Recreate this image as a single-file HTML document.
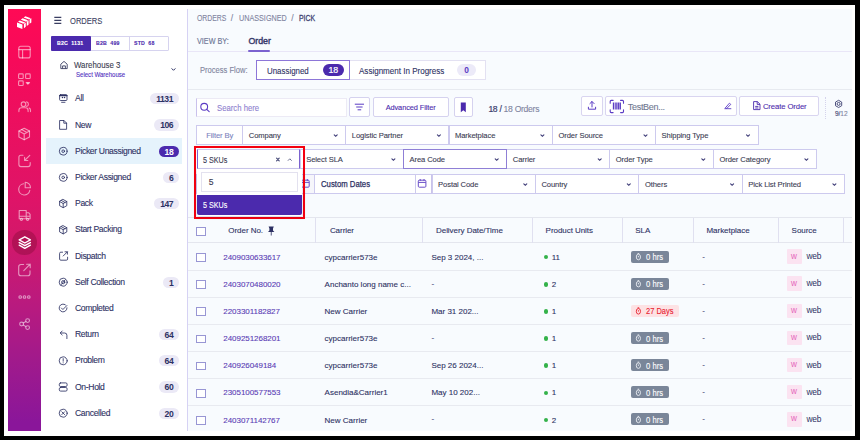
<!DOCTYPE html>
<html><head><meta charset="utf-8"><style>
*{box-sizing:border-box;margin:0;padding:0}
html,body{width:860px;height:440px;overflow:hidden;background:#000}
body{position:relative;font-family:"Liberation Sans",sans-serif;color:#2d3163}
.a{position:absolute}
.t{position:absolute;white-space:nowrap;line-height:1;-webkit-text-stroke:0.1px currentColor}
svg{position:absolute;overflow:visible}
#frame{position:absolute;left:4px;top:5px;width:851px;height:431px;background:#fff}
#rail{position:absolute;left:8px;top:9px;width:33px;height:422px;background:linear-gradient(180deg,#ff0a55 0%,#f60a5a 12.6%,#ea1060 29%,#de1468 45.7%,#d2186a 55%,#ba1a7e 69.4%,#a01a8c 83.6%,#8a169a 98%)}
#nav{position:absolute;left:41px;top:9px;width:147px;height:422px;background:#fff}
#main{position:absolute;left:188px;top:9px;width:664px;height:422px;background:#f8fbfe}
.bd{position:absolute;height:11.2px;border-radius:6px;background:#ebe9f6;color:#2d3163;font-size:8.6px;font-weight:bold;letter-spacing:-0.45px;line-height:12px;text-align:center}
.nl{position:absolute;font-size:8.6px;letter-spacing:-0.35px;color:#2d3163;white-space:nowrap;line-height:1;-webkit-text-stroke:0.1px currentColor}
.box{position:absolute;background:#fff;border:1px solid #dcd9f1}
.st{position:absolute;font-size:8px;color:#2d3163;white-space:nowrap;line-height:1}
</style></head><body>
<div id="frame"></div><div id="rail"></div><div id="nav"></div><div id="main"></div>
<svg style="left:0;top:0" width="60" height="440" viewBox="0 0 60 440" fill="none" stroke="rgba(255,255,255,0.55)" stroke-width="1.1" stroke-linecap="round" stroke-linejoin="round"><g fill="#fff" stroke="none"><polygon points="17.00,22.60 22.40,24.60 22.40,28.90 17.00,26.90"/><polygon points="18.01,21.83 23.41,23.83 25.20,22.47 19.80,20.47"/><polygon points="23.96,23.83 25.75,22.47 25.75,26.77 23.96,28.13"/><polygon points="20.81,19.70 26.21,21.70 28.00,20.33 22.60,18.33"/><polygon points="26.76,21.70 28.55,20.33 28.55,24.63 26.76,26.00"/><polygon points="23.61,17.57 29.01,19.57 30.80,18.20 25.40,16.20"/><polygon points="29.56,19.57 31.35,18.20 31.35,22.50 29.56,23.87"/></g><rect x="18.8" y="46.3" width="11.4" height="11.6" rx="2"/><path d="M18.8 49.6H30.2M22.6 49.6V57.9"/><rect x="18.6" y="73.9" width="4.6" height="4.6" rx="0.8"/><rect x="25.6" y="73.9" width="4.6" height="4.6" rx="0.8"/><rect x="18.6" y="80.9" width="4.6" height="4.6" rx="0.8"/><path d="M26.2 82.6L27.9 84.2L29.6 82.6Z" fill="rgba(255,255,255,0.55)"/><circle cx="23.5" cy="104.2" r="2.3"/><path d="M18.9 111.6V110.4a2.6 2.6 0 0 1 2.6-2.6h4a2.6 2.6 0 0 1 2.6 2.6v1.2M26.6 101.9a2.3 2.3 0 0 1 0 4.5M29.2 108a2.3 2.3 0 0 1 1.3 2.2v1.4"/><path d="M24.2 128.2l5.3 2.9v5.8l-5.3 2.9l-5.3-2.9v-5.8z"/><path d="M18.9 131.1l5.3 2.9l5.3-2.9M24.2 134v5.8M21.6 129.6l5.3 2.9"/><path d="M23.0 155.3H20.9a2 2 0 0 0-2 2v7.3a2 2 0 0 0 2 2h7.3a2 2 0 0 0 2-2v-2.1"/><path d="M29.8 155.3L24.6 160.5M24.6 157.3V160.5H27.8"/><path d="M29.8 190.4a5.6 5.6 0 1 1-6.3-6.6"/><path d="M25.2 182.2v5.5h5.3a5.4 5.4 0 0 0-5.3-5.5z"/><path d="M19.2 210.5h7v8.2h-7zM26.2 212.8h2.6l1.3 1.6v4.3h-3.9M19.2 216.2h10.9"/><circle cx="21.4" cy="219.3" r="1.1"/><circle cx="27.6" cy="219.3" r="1.1"/></svg>
<div class="a" style="left:12.3px;top:230.4px;width:24.5px;height:24.5px;border-radius:50%;background:rgba(105,8,35,0.3)"></div>
<svg style="left:0;top:0" width="60" height="440" viewBox="0 0 60 440" fill="none" stroke="rgba(255,255,255,0.55)" stroke-width="1.1" stroke-linecap="round" stroke-linejoin="round"><g stroke="#fff" stroke-width="1.4"><path d="M24.8 236.8l5.6 3.1l-5.6 3.1l-5.6-3.1z"/><path d="M19.2 242.6l5.6 3.1l5.6-3.1M19.2 245.2l5.6 3.1l5.6-3.1"/></g><path d="M23.6 264.5H21a2.3 2.3 0 0 0-2.3 2.3v6.7a2.3 2.3 0 0 0 2.3 2.3h6.7a2.3 2.3 0 0 0 2.3-2.3v-2.6"/><path d="M23.8 270.6L30.2 264.2M26.6 264.2h3.6v3.6"/><circle cx="20.2" cy="297" r="1.3"/><circle cx="24.5" cy="297" r="1.3"/><circle cx="28.8" cy="297" r="1.3"/><circle cx="21.6" cy="324" r="1.9"/><circle cx="27.6" cy="320.6" r="1.9"/><circle cx="27.6" cy="327.6" r="1.9"/><path d="M23.3 323l2.6-1.5M23.3 325l2.6 1.6"/></svg>
<div class="a" style="left:187px;top:9px;width:1px;height:422px;background:#d6d2f4"></div>
<svg style="left:0;top:0" width="200" height="60" viewBox="0 0 200 60" fill="none" stroke="#3a3e62" stroke-width="1.1"><path d="M54.3 17.4H61.3M54.3 20.4H61.3M54.3 23.4H61.3"/></svg>
<div class="t" style="left:69.7px;top:16.50px;font-size:8.6px;transform:scaleX(0.88);transform-origin:0 0;color:#3a3e62;letter-spacing:0px;">ORDERS</div>
<div class="a" style="left:51px;top:36px;width:118px;height:14.5px;border:1px solid #d6d3ef;border-radius:1px;background:#fff"></div>
<div class="a" style="left:51px;top:36px;width:39.6px;height:14.5px;background:#4b2aad;border-radius:1px"></div>
<div class="a" style="left:129.3px;top:36px;width:1px;height:14.5px;background:#d6d3ef"></div>
<div class="t" style="left:56.7px;top:41.05px;font-size:5.9px;transform:scaleX(0.89);transform-origin:0 0;color:#fff;font-weight:bold;letter-spacing:0.2px;">B2C&nbsp;&nbsp;1131</div>
<div class="t" style="left:95.6px;top:41.05px;font-size:5.9px;transform:scaleX(0.89);transform-origin:0 0;color:#4b2aad;font-weight:bold;letter-spacing:0.2px;">B2B&nbsp;&nbsp;499</div>
<div class="t" style="left:134.3px;top:41.05px;font-size:5.9px;transform:scaleX(0.89);transform-origin:0 0;color:#4b2aad;font-weight:bold;letter-spacing:0.2px;">STD&nbsp;&nbsp;68</div>
<svg style="left:0;top:0" width="200" height="90" viewBox="0 0 200 90" fill="none" stroke="#3a3e62" stroke-width="0.9" stroke-linejoin="round"><path d="M60.8 64.2L64 61.4L67.2 64.2V68.6H60.8Z"/><path d="M62.6 68.6V65.9H65.4V68.6"/></svg>
<div class="t" style="left:73.7px;top:60.60px;font-size:9px;transform:scaleX(0.87);transform-origin:0 0;color:#3b3d50;">Warehouse 3</div>
<div class="t" style="left:76.3px;top:72.40px;font-size:6.8px;transform:scaleX(0.89);transform-origin:0 0;color:#4f2fc0;">Select Warehouse</div>
<svg style="left:0;top:0" width="200" height="90" viewBox="0 0 200 90" fill="none" stroke="#3a3e62" stroke-width="0.9"><path d="M171.6 68.4L173.5 70.3L175.4 68.4" stroke="#2d3163" stroke-width="1"/></svg>
<div class="a" style="left:45.8px;top:137.6px;width:136.4px;height:26.5px;background:#e5f3fc"></div>
<div class="nl" style="left:75px;top:94.30px">All</div>
<div class="bd" style="left:150.0px;top:93.20px;width:29.2px;background:#ebe9f6;color:#2d3163">1131</div>
<div class="nl" style="left:75px;top:120.50px">New</div>
<div class="bd" style="left:154.2px;top:119.40px;width:25px;background:#ebe9f6;color:#2d3163">106</div>
<div class="nl" style="left:75px;top:146.70px">Picker Unassigned</div>
<div class="bd" style="left:158.7px;top:145.60px;width:20.5px;background:#4b2aad;color:#fff">18</div>
<div class="nl" style="left:75px;top:172.90px">Picker Assigned</div>
<div class="bd" style="left:163.0px;top:171.80px;width:16.2px;background:#ebe9f6;color:#2d3163">6</div>
<div class="nl" style="left:75px;top:199.10px">Pack</div>
<div class="bd" style="left:154.2px;top:198.00px;width:25px;background:#ebe9f6;color:#2d3163">147</div>
<div class="nl" style="left:75px;top:225.30px">Start Packing</div>
<div class="nl" style="left:75px;top:251.50px">Dispatch</div>
<div class="nl" style="left:75px;top:277.70px">Self Collection</div>
<div class="bd" style="left:163.0px;top:276.60px;width:16.2px;background:#ebe9f6;color:#2d3163">1</div>
<div class="nl" style="left:75px;top:303.90px">Completed</div>
<div class="nl" style="left:75px;top:330.10px">Return</div>
<div class="bd" style="left:158.7px;top:329.00px;width:20.5px;background:#ebe9f6;color:#2d3163">64</div>
<div class="nl" style="left:75px;top:356.30px">Problem</div>
<div class="bd" style="left:158.7px;top:355.20px;width:20.5px;background:#ebe9f6;color:#2d3163">64</div>
<div class="nl" style="left:75px;top:382.50px">On-Hold</div>
<div class="bd" style="left:158.7px;top:381.40px;width:20.5px;background:#ebe9f6;color:#2d3163">60</div>
<div class="nl" style="left:75px;top:408.70px">Cancelled</div>
<div class="bd" style="left:158.7px;top:407.60px;width:20.5px;background:#ebe9f6;color:#2d3163">20</div>
<svg style="left:0;top:0" width="200" height="440" viewBox="0 0 200 440" fill="none" stroke="#2d3163" stroke-width="0.85" stroke-linecap="round" stroke-linejoin="round"><rect x="59.6" y="94.6" width="7.4" height="5.9" rx="1"/><path d="M59.6 95.6H67" stroke-width="1.2"/><path d="M61.6 102.3H65"/><path d="M62.4 97.5h0.1M64.5 97.5h0.1" stroke-width="1.4"/><path d="M60 120.5H64L66.6 123.1V129.3H60Z"/><path d="M63.8 120.5V123.2H66.6"/><circle cx="63.2" cy="151.2" r="3.9"/><circle cx="63.2" cy="151.2" r="1.3"/><circle cx="63.2" cy="177.4" r="3.9"/><circle cx="63.2" cy="177.4" r="1.3"/><path d="M63.2 199.5l3.6 2v4.2l-3.6 2l-3.6-2v-4.2z"/><path d="M59.6 201.5l3.6 2l3.6-2M63.2 203.5v4.1M61.4 200.5l3.6 2"/><path d="M63.2 225.7l3.6 2v4.2l-3.6 2l-3.6-2v-4.2z"/><path d="M59.6 227.7l3.6 2l3.6-2M63.2 229.7v4.1M61.4 226.7l3.6 2"/><path d="M62.6 252.2H60.8a1.2 1.2 0 0 0-1.2 1.2v5.6a1.2 1.2 0 0 0 1.2 1.2h5.6a1.2 1.2 0 0 0 1.2-1.2V257.2"/><path d="M63.2 256.0L67.4 251.8M65 251.8h2.4v2.4"/><circle cx="63.2" cy="282.2" r="4"/><circle cx="63.2" cy="282.2" r="1.6"/><path d="M61.2 284.6L65.2 279.8"/><path d="M67 307.8a3.9 3.9 0 1 1-1.6-3"/><path d="M61.4 308.0l1.5 1.5l4-4"/><path d="M60.4 333.0H64.6a2.3 2.3 0 0 1 2.3 2.3V338.6M62.2 331.0L60.2 333.0L62.2 335.0"/><circle cx="63.2" cy="360.8" r="4"/><path d="M63.2 358.6V361.2M63.2 362.8v0.1"/><rect x="59.3" y="382.9" width="7.8" height="3.6" rx="1.3"/><rect x="59.3" y="387.5" width="7.8" height="3.6" rx="1.3"/><circle cx="63.2" cy="413.2" r="4"/><path d="M61.8 411.8l2.8 2.8M64.6 411.8l-2.8 2.8"/></svg>
<div class="a" style="left:188px;top:50.5px;width:664px;height:1px;background:#e9e6f7"></div>
<div class="a" style="left:188px;top:88.6px;width:664px;height:1px;background:#e7eaf0"></div>
<div class="t" style="left:196.9px;top:14.00px;font-size:8.6px;transform:scaleX(0.8);transform-origin:0 0;color:#80849f;">ORDERS</div>
<div class="t" style="left:230.8px;top:14.00px;font-size:8.6px;color:#80849f;">/</div>
<div class="t" style="left:238.8px;top:14.00px;font-size:8.6px;transform:scaleX(0.84);transform-origin:0 0;color:#80849f;">UNASSIGNED</div>
<div class="t" style="left:291.2px;top:14.00px;font-size:8.6px;color:#80849f;">/</div>
<div class="t" style="left:299.3px;top:14.00px;font-size:8.6px;transform:scaleX(0.8);transform-origin:0 0;color:#3c4070;-webkit-text-stroke:0.3px #3c4070;">PICK</div>
<div class="t" style="left:196.9px;top:36.75px;font-size:8.3px;transform:scaleX(0.87);transform-origin:0 0;color:#6e7796;-webkit-text-stroke:0.15px #6e7796;">VIEW BY:</div>
<div class="t" style="left:248.4px;top:36.60px;font-size:8.8px;color:#35386a;-webkit-text-stroke:0.4px #35386a;">Order</div>
<div class="a" style="left:248.4px;top:50.2px;width:21.4px;height:2px;background:#7b62cf;border-radius:1px"></div>
<div class="t" style="left:199.7px;top:65.90px;font-size:8.6px;transform:scaleX(0.88);transform-origin:0 0;color:#80849c;">Process Flow:</div>
<div class="a" style="left:256.4px;top:60.3px;width:230px;height:19.4px;background:#fff;border:1px solid #e3e1f2"></div>
<div class="a" style="left:256.4px;top:60.3px;width:93.3px;height:19.4px;border:1px solid #8d76d8"></div>
<div class="t" style="left:266.5px;top:67.10px;font-size:8.6px;transform:scaleX(0.92);transform-origin:0 0;color:#2d3163;">Unassigned</div>
<div class="bd" style="left:322.5px;top:64.4px;width:21.6px;height:12px;line-height:13px;background:#4b2aad;color:#fff;font-size:8.8px;font-weight:normal;letter-spacing:0;-webkit-text-stroke:0.2px #fff">18</div>
<div class="t" style="left:359px;top:67.10px;font-size:8.6px;transform:scaleX(0.935);transform-origin:0 0;color:#2d3163;">Assignment In Progress</div>
<div class="bd" style="left:457px;top:64.4px;width:19.2px;height:12px;line-height:13px;background:#eceaf8;color:#5b3cc4;font-size:8.4px;font-weight:bold;letter-spacing:0">0</div>
<div class="a" style="left:196.3px;top:98px;width:150.5px;height:19.2px;background:#fff;border:1px solid #eceaf5;border-left:1px solid #c9c1ec"></div>
<svg style="left:0;top:0" width="860" height="440" viewBox="0 0 860 440" fill="none" stroke="#5b3cc4" stroke-width="1.1" stroke-linecap="round"><circle cx="204.2" cy="106.8" r="3.4"/><path d="M206.7 109.3L209.2 111.6"/></svg>
<div class="t" style="left:217.4px;top:103.90px;font-size:8.6px;transform:scaleX(0.9);transform-origin:0 0;color:#8e82cf;">Search here</div>
<div class="a" style="left:349px;top:97px;width:20.7px;height:20px;background:#fff;border:1px solid #d5d2ef;border-radius:2px"></div>
<svg style="left:0;top:0" width="860" height="440" viewBox="0 0 860 440" fill="none" stroke="#5b3cc4" stroke-width="1" stroke-linecap="round"><path d="M355.2 104.2H363.6M356.6 107H362.2M358 109.8H360.8"/></svg>
<div class="a" style="left:372.5px;top:97px;width:76.2px;height:20.2px;background:#fff;border:1px solid #d5d2ef;border-radius:2px"></div>
<div class="t" style="left:385.7px;top:103.90px;font-size:7.4px;color:#4b2aad;letter-spacing:-0.1px;">Advanced Filter</div>
<div class="a" style="left:454px;top:97px;width:18.5px;height:20.2px;background:#fff;border:1px solid #d5d2ef;border-radius:2px"></div>
<svg style="left:0;top:0" width="860" height="440" viewBox="0 0 860 440"><path d="M460.8 102.6H465.8V112.2L463.3 110.2L460.8 112.2Z" fill="#4b2aad"/></svg>
<div class="t" style="left:488.4px;top:105.2px;font-size:8.6px;letter-spacing:-0.3px;color:#80849f"><span style="color:#3c4070;-webkit-text-stroke:0.2px #3c4070">18 /</span> 18 Orders</div>
<div class="a" style="left:581.4px;top:96.2px;width:21.2px;height:19.6px;background:#fff;border:1px solid #d9d5f0;border-radius:2px"></div>
<svg style="left:0;top:0" width="860" height="440" viewBox="0 0 860 440" fill="none" stroke="#5b3cc4" stroke-width="1" stroke-linecap="round" stroke-linejoin="round"><path d="M592 107V101.6M589.9 103.6L592 101.5L594.1 103.6M588.4 107.2V109.2H595.6V107.2"/></svg>
<div class="a" style="left:605.2px;top:96.1px;width:131.4px;height:19.9px;background:#fff;border:1px solid #d9d5f0;border-radius:2px"></div>
<svg style="left:0;top:0" width="860" height="440" viewBox="0 0 860 440" fill="none" stroke="#5b3cc4" stroke-width="1.1" stroke-linecap="round"><path d="M610.2 103.3V101.4a1 1 0 0 1 1-1h1.9M620.6 100.4h1.9a1 1 0 0 1 1 1v1.9M623.5 109.7v1.9a1 1 0 0 1-1 1h-1.9M613.1 112.6h-1.9a1 1 0 0 1-1-1v-1.9"/><path d="M613.6 102.6v6.9M616 102.6v6.9M618.2 102.6v6.9M620.2 102.6v6.9" stroke-width="1.5" stroke-linecap="butt"/><path d="M724.8 108.7H730.9M725.6 107.6L729.4 103.2L730.8 104.4L727 108.2Z" stroke-width="0.9"/></svg>
<div class="t" style="left:627.8px;top:102.50px;font-size:9px;color:#707891;letter-spacing:-0.3px;">TestBen...</div>
<div class="a" style="left:739.3px;top:96.2px;width:79.4px;height:19.9px;background:#fff;border:1px solid #d9d5f0;border-radius:2px"></div>
<svg style="left:0;top:0" width="860" height="440" viewBox="0 0 860 440" fill="none" stroke="#4b2aad" stroke-width="0.9" stroke-linejoin="round"><path d="M753.6 101.6H757.4L760 104.2V109.6H753.6Z"/><path d="M757.2 101.6V104.4H760M755.2 106.4H758.4M755.2 108H758.4"/></svg>
<div class="t" style="left:762.9px;top:102.75px;font-size:7.7px;color:#4b2aad;letter-spacing:-0.1px;">Create Order</div>
<div class="a" style="left:825.2px;top:96.5px;width:0;height:22.3px;border-left:1px dotted #d5d3ec"></div>
<svg style="left:0;top:0" width="860" height="440" viewBox="0 0 860 440" fill="none" stroke="#3c4070" stroke-width="0.9" stroke-linejoin="round"><path d="M838.6 100.3L841.7 102.1V105.7L838.6 107.5L835.5 105.7V102.1Z"/><circle cx="838.6" cy="103.9" r="1.5"/></svg>
<div class="t" style="left:835px;top:111.2px;font-size:6.6px;color:#3c4070;letter-spacing:-0.1px">9/<span style="color:#80849f">12</span></div>
<div class="a" style="left:196.3px;top:125px;width:47.0px;height:20px;background:#fff;border:1px solid #cdcaee;"></div>
<div class="t" style="left:206.2px;top:132.10px;font-size:7.6px;letter-spacing:-0.1px;color:#7a82bd">Filter By</div>
<div class="a" style="left:242.3px;top:125px;width:104.0px;height:20px;background:#fff;border:1px solid #cdcaee;"></div>
<div class="t" style="left:248.8px;top:132.10px;font-size:7.6px;letter-spacing:-0.1px;color:#3a3b52">Company</div>
<svg style="left:0;top:0" width="860" height="440" viewBox="0 0 860 440" fill="none" stroke="#3f3d78" stroke-width="1.1" stroke-linecap="round"><path d="M334.2 134.8L335.7 136.2L337.2 134.8"/></svg>
<div class="a" style="left:345.3px;top:125px;width:104.19999999999999px;height:20px;background:#fff;border:1px solid #cdcaee;"></div>
<div class="t" style="left:351.8px;top:132.10px;font-size:7.6px;letter-spacing:-0.1px;color:#3a3b52">Logistic Partner</div>
<svg style="left:0;top:0" width="860" height="440" viewBox="0 0 860 440" fill="none" stroke="#3f3d78" stroke-width="1.1" stroke-linecap="round"><path d="M437.4 134.8L438.9 136.2L440.4 134.8"/></svg>
<div class="a" style="left:448.5px;top:125px;width:104.5px;height:20px;background:#fff;border:1px solid #cdcaee;"></div>
<div class="t" style="left:455.0px;top:132.10px;font-size:7.6px;letter-spacing:-0.1px;color:#3a3b52">Marketplace</div>
<svg style="left:0;top:0" width="860" height="440" viewBox="0 0 860 440" fill="none" stroke="#3f3d78" stroke-width="1.1" stroke-linecap="round"><path d="M540.9 134.8L542.4 136.2L543.9 134.8"/></svg>
<div class="a" style="left:552px;top:125px;width:104.10000000000002px;height:20px;background:#fff;border:1px solid #cdcaee;"></div>
<div class="t" style="left:558.5px;top:132.10px;font-size:7.6px;letter-spacing:-0.1px;color:#3a3b52">Order Source</div>
<svg style="left:0;top:0" width="860" height="440" viewBox="0 0 860 440" fill="none" stroke="#3f3d78" stroke-width="1.1" stroke-linecap="round"><path d="M644.0 134.8L645.5 136.2L647.0 134.8"/></svg>
<div class="a" style="left:655.1px;top:125px;width:103.5px;height:20px;background:#fff;border:1px solid #cdcaee;"></div>
<div class="t" style="left:661.6px;top:132.10px;font-size:7.6px;letter-spacing:-0.1px;color:#3a3b52">Shipping Type</div>
<svg style="left:0;top:0" width="860" height="440" viewBox="0 0 860 440" fill="none" stroke="#3f3d78" stroke-width="1.1" stroke-linecap="round"><path d="M746.5 134.8L748.0 136.2L749.5 134.8"/></svg>
<div class="a" style="left:299.7px;top:149px;width:104.30000000000001px;height:20px;background:#fff;border:1px solid #cdcaee;"></div>
<div class="t" style="left:306.2px;top:156.10px;font-size:7.6px;letter-spacing:-0.1px;color:#3a3b52">Select SLA</div>
<svg style="left:0;top:0" width="860" height="440" viewBox="0 0 860 440" fill="none" stroke="#3f3d78" stroke-width="1.1" stroke-linecap="round"><path d="M391.9 158.8L393.4 160.2L394.9 158.8"/></svg>
<div class="a" style="left:506.3px;top:149px;width:103.99999999999994px;height:20px;background:#fff;border:1px solid #cdcaee;"></div>
<div class="t" style="left:512.8px;top:156.10px;font-size:7.6px;letter-spacing:-0.1px;color:#3a3b52">Carrier</div>
<svg style="left:0;top:0" width="860" height="440" viewBox="0 0 860 440" fill="none" stroke="#3f3d78" stroke-width="1.1" stroke-linecap="round"><path d="M598.2 158.8L599.7 160.2L601.2 158.8"/></svg>
<div class="a" style="left:609.3px;top:149px;width:104.60000000000002px;height:20px;background:#fff;border:1px solid #cdcaee;"></div>
<div class="t" style="left:615.8px;top:156.10px;font-size:7.6px;letter-spacing:-0.1px;color:#3a3b52">Order Type</div>
<svg style="left:0;top:0" width="860" height="440" viewBox="0 0 860 440" fill="none" stroke="#3f3d78" stroke-width="1.1" stroke-linecap="round"><path d="M701.8 158.8L703.3 160.2L704.8 158.8"/></svg>
<div class="a" style="left:712.9px;top:149px;width:104.10000000000002px;height:20px;background:#fff;border:1px solid #cdcaee;"></div>
<div class="t" style="left:719.4px;top:156.10px;font-size:7.6px;letter-spacing:-0.1px;color:#3a3b52">Order Category</div>
<svg style="left:0;top:0" width="860" height="440" viewBox="0 0 860 440" fill="none" stroke="#3f3d78" stroke-width="1.1" stroke-linecap="round"><path d="M804.9 158.8L806.4 160.2L807.9 158.8"/></svg>
<div class="a" style="left:403px;top:149px;width:104.30000000000001px;height:20px;background:#fff;border:1px solid #cdcaee;border-color:#8f7fd6"></div>
<div class="t" style="left:409.5px;top:156.10px;font-size:7.6px;letter-spacing:-0.1px;color:#3a3b52">Area Code</div>
<svg style="left:0;top:0" width="860" height="440" viewBox="0 0 860 440" fill="none" stroke="#3f3d78" stroke-width="1.1" stroke-linecap="round"><path d="M495.2 158.8L496.7 160.2L498.2 158.8"/></svg>
<div class="a" style="left:196.3px;top:174px;width:118px;height:20px;background:#fff;border:1px solid #cdcaee"></div>
<div class="a" style="left:297px;top:174px;width:17.5px;height:20px;background:#f6f6fb;border:1px solid #cdcaee;border-right:1.5px solid #c9c3ea"></div>
<div class="a" style="left:314px;top:174px;width:101.69999999999999px;height:20px;background:#fff;border:1px solid #cdcaee;"></div>
<div class="t" style="left:320.7px;top:179.95px;font-size:8.5px;transform:scaleX(0.91);transform-origin:0 0;color:#2d3163;-webkit-text-stroke:0.25px #2d3163;">Custom Dates</div>
<div class="a" style="left:414.7px;top:174px;width:17.2px;height:20px;background:#fff;border:1px solid #cdcaee;border-right:1.5px solid #c9c3ea"></div>
<div class="a" style="left:431.6px;top:174px;width:104.29999999999995px;height:20px;background:#fff;border:1px solid #cdcaee;"></div>
<div class="t" style="left:438.1px;top:181.10px;font-size:7.6px;letter-spacing:-0.1px;color:#3a3b52">Postal Code</div>
<svg style="left:0;top:0" width="860" height="440" viewBox="0 0 860 440" fill="none" stroke="#3f3d78" stroke-width="1.1" stroke-linecap="round"><path d="M523.8 183.8L525.3 185.2L526.8 183.8"/></svg>
<div class="a" style="left:534.9px;top:174px;width:104.5px;height:20px;background:#fff;border:1px solid #cdcaee;"></div>
<div class="t" style="left:541.4px;top:181.10px;font-size:7.6px;letter-spacing:-0.1px;color:#3a3b52">Country</div>
<svg style="left:0;top:0" width="860" height="440" viewBox="0 0 860 440" fill="none" stroke="#3f3d78" stroke-width="1.1" stroke-linecap="round"><path d="M627.3 183.8L628.8 185.2L630.3 183.8"/></svg>
<div class="a" style="left:638.4px;top:174px;width:104.30000000000007px;height:20px;background:#fff;border:1px solid #cdcaee;"></div>
<div class="t" style="left:644.9px;top:181.10px;font-size:7.6px;letter-spacing:-0.1px;color:#3a3b52">Others</div>
<svg style="left:0;top:0" width="860" height="440" viewBox="0 0 860 440" fill="none" stroke="#3f3d78" stroke-width="1.1" stroke-linecap="round"><path d="M730.6 183.8L732.1 185.2L733.6 183.8"/></svg>
<div class="a" style="left:741.7px;top:174px;width:103.29999999999995px;height:20px;background:#fff;border:1px solid #cdcaee;"></div>
<div class="t" style="left:748.2px;top:181.10px;font-size:7.6px;letter-spacing:-0.1px;color:#3a3b52">Pick List Printed</div>
<svg style="left:0;top:0" width="860" height="440" viewBox="0 0 860 440" fill="none" stroke="#3f3d78" stroke-width="1.1" stroke-linecap="round"><path d="M832.9 183.8L834.4 185.2L835.9 183.8"/></svg>
<svg style="left:0;top:0" width="860" height="440" viewBox="0 0 860 440" fill="none" stroke="#6a4fc8" stroke-width="1"><rect x="418.3" y="180.2" width="7.6" height="7" rx="1"/><path d="M418.3 182.4H425.9M420.2 179V181M424 179V181"/><rect x="301.6" y="180.2" width="7.6" height="7" rx="1"/><path d="M301.6 182.4H309.2M303.5 179V181M307.3 179V181"/></svg>
<div class="a" style="left:188px;top:217.2px;width:664px;height:1px;background:#e4e6ee"></div>
<div class="a" style="left:188px;top:242.2px;width:664px;height:1px;background:#e4e6ee"></div>
<div class="a" style="left:315.4px;top:218px;width:1px;height:24.5px;background:#e0e0f0"></div>
<div class="a" style="left:421.5px;top:218px;width:1px;height:24.5px;background:#e0e0f0"></div>
<div class="a" style="left:531.7px;top:218px;width:1px;height:24.5px;background:#e0e0f0"></div>
<div class="a" style="left:622.2px;top:218px;width:1px;height:24.5px;background:#e0e0f0"></div>
<div class="a" style="left:692.6px;top:218px;width:1px;height:24.5px;background:#e0e0f0"></div>
<div class="a" style="left:777.7px;top:218px;width:1px;height:24.5px;background:#e0e0f0"></div>
<div class="a" style="left:843.3px;top:218px;width:1px;height:24.5px;background:#e0e0f0"></div>
<div class="t" style="left:228.3px;top:227.00px;font-size:8px;color:#2d3163;letter-spacing:-0.05px;">Order No.</div>
<div class="t" style="left:329.9px;top:227.00px;font-size:8px;color:#2d3163;letter-spacing:-0.05px;">Carrier</div>
<div class="t" style="left:436px;top:227.00px;font-size:8px;color:#2d3163;letter-spacing:-0.05px;">Delivery Date/Time</div>
<div class="t" style="left:545.6px;top:227.00px;font-size:8px;color:#2d3163;letter-spacing:-0.05px;">Product Units</div>
<div class="t" style="left:635.3px;top:227.00px;font-size:8px;color:#2d3163;letter-spacing:-0.05px;">SLA</div>
<div class="t" style="left:706.5px;top:227.00px;font-size:8px;color:#2d3163;letter-spacing:-0.05px;">Marketplace</div>
<div class="t" style="left:791.6px;top:227.00px;font-size:8px;color:#2d3163;letter-spacing:-0.05px;">Source</div>
<svg style="left:0;top:0" width="860" height="440" viewBox="0 0 860 440"><path d="M268.6 226.6H273.8L273 228.6V230.6L274.4 232H268L269.4 230.6V228.6Z M270.8 232V235.6H271.6V232Z" fill="#2d3163"/></svg>
<div class="a" style="left:196.1px;top:227.4px;width:9.6px;height:8.9px;border:1px solid #9896d4;background:#fff"></div>
<div class="a" style="left:188px;top:269.7px;width:664px;height:1px;background:#e8eaf0"></div>
<div class="a" style="left:196.1px;top:253.09999999999997px;width:9.6px;height:8.8px;border:1px solid #9896d4;background:#fff"></div>
<div class="t" style="left:223.3px;top:253.60px;font-size:8px;color:#5a3db5;letter-spacing:-0.05px;">2409030633617</div>
<div class="t" style="left:324.6px;top:253.60px;font-size:8px;color:#2d3163;letter-spacing:0.0px;">cypcarrier573e</div>
<div class="t" style="left:431.4px;top:253.60px;font-size:8px;color:#2d3163;letter-spacing:0.0px;">Sep 3 2024, ...</div>
<div class="a" style="left:543.6px;top:254.80px;width:4.6px;height:4.6px;border-radius:50%;background:#34b24a"></div>
<div class="t" style="left:551.7px;top:253.60px;font-size:8px;color:#2d3163;">11</div>
<div class="a" style="left:631.2px;top:250.50px;width:37.4px;height:12px;border-radius:2px;background:#7a8699"></div>
<svg style="left:0;top:0" width="860" height="440" viewBox="0 0 860 440" fill="none" stroke="#e9ecf2" stroke-width="0.9"><ellipse cx="638.4" cy="257.0" rx="2.1" ry="2.8"/><path d="M638.4 255.9V257.3M637.6 253.5H639.2"/></svg>
<div class="t" style="left:645.8px;top:253.10px;font-size:8.6px;transform:scaleX(0.89);transform-origin:0 0;color:#fff;">0 hrs</div>
<div class="t" style="left:702.3px;top:252.50px;font-size:8px;color:#2d3163;">-</div>
<div class="a" style="left:786.9px;top:249.30px;width:15.1px;height:14.4px;background:#fbe3f1;border-radius:1px"></div>
<div class="t" style="left:791.0px;top:252.50px;font-size:8.2px;color:#e463b9;-webkit-text-stroke:0;">w</div>
<div class="t" style="left:806.4px;top:252.00px;font-size:8.4px;color:#2d3163;letter-spacing:-0.15px;-webkit-text-stroke:0;">web</div>
<div class="a" style="left:188px;top:296.84999999999997px;width:664px;height:1px;background:#e8eaf0"></div>
<div class="a" style="left:196.1px;top:280.24999999999994px;width:9.6px;height:8.8px;border:1px solid #9896d4;background:#fff"></div>
<div class="t" style="left:223.3px;top:280.75px;font-size:8px;color:#5a3db5;letter-spacing:-0.05px;">2403070480020</div>
<div class="t" style="left:324.6px;top:280.75px;font-size:8px;color:#2d3163;letter-spacing:0.0px;">Anchanto long name c...</div>
<div class="t" style="left:431.4px;top:279.65px;font-size:8px;color:#2d3163;letter-spacing:0.0px;">-</div>
<div class="a" style="left:543.6px;top:281.95px;width:4.6px;height:4.6px;border-radius:50%;background:#34b24a"></div>
<div class="t" style="left:551.7px;top:280.75px;font-size:8px;color:#2d3163;">2</div>
<div class="a" style="left:631.2px;top:277.65px;width:37.4px;height:12px;border-radius:2px;background:#7a8699"></div>
<svg style="left:0;top:0" width="860" height="440" viewBox="0 0 860 440" fill="none" stroke="#e9ecf2" stroke-width="0.9"><ellipse cx="638.4" cy="284.1" rx="2.1" ry="2.8"/><path d="M638.4 283.0V284.4M637.6 280.6H639.2"/></svg>
<div class="t" style="left:645.8px;top:280.25px;font-size:8.6px;transform:scaleX(0.89);transform-origin:0 0;color:#fff;">0 hrs</div>
<div class="t" style="left:702.3px;top:279.65px;font-size:8px;color:#2d3163;">-</div>
<div class="a" style="left:786.9px;top:276.45px;width:15.1px;height:14.4px;background:#fbe3f1;border-radius:1px"></div>
<div class="t" style="left:791.0px;top:279.65px;font-size:8.2px;color:#e463b9;-webkit-text-stroke:0;">w</div>
<div class="t" style="left:806.4px;top:279.15px;font-size:8.4px;color:#2d3163;letter-spacing:-0.15px;-webkit-text-stroke:0;">web</div>
<div class="a" style="left:188px;top:324.0px;width:664px;height:1px;background:#e8eaf0"></div>
<div class="a" style="left:196.1px;top:307.4px;width:9.6px;height:8.8px;border:1px solid #9896d4;background:#fff"></div>
<div class="t" style="left:223.3px;top:307.90px;font-size:8px;color:#5a3db5;letter-spacing:-0.05px;">2203301182827</div>
<div class="t" style="left:324.6px;top:307.90px;font-size:8px;color:#2d3163;letter-spacing:0.0px;">New Carrier</div>
<div class="t" style="left:431.4px;top:307.90px;font-size:8px;color:#2d3163;letter-spacing:0.0px;">Mar 31 202...</div>
<div class="a" style="left:543.6px;top:309.10px;width:4.6px;height:4.6px;border-radius:50%;background:#34b24a"></div>
<div class="t" style="left:551.7px;top:307.90px;font-size:8px;color:#2d3163;">1</div>
<div class="a" style="left:631.2px;top:304.80px;width:48px;height:12px;border-radius:2px;background:#fde2e4"></div>
<svg style="left:0;top:0" width="860" height="440" viewBox="0 0 860 440" fill="none" stroke="#e8202f" stroke-width="0.9"><ellipse cx="638.4" cy="311.3" rx="2.1" ry="2.8"/><path d="M638.4 310.2V311.6M637.6 307.8H639.2"/></svg>
<div class="t" style="left:645.5px;top:307.40px;font-size:8.6px;transform:scaleX(0.87);transform-origin:0 0;color:#e8202f;">27 Days</div>
<div class="t" style="left:702.3px;top:306.80px;font-size:8px;color:#2d3163;">-</div>
<div class="a" style="left:786.9px;top:303.60px;width:15.1px;height:14.4px;background:#fbe3f1;border-radius:1px"></div>
<div class="t" style="left:791.0px;top:306.80px;font-size:8.2px;color:#e463b9;-webkit-text-stroke:0;">w</div>
<div class="t" style="left:806.4px;top:306.30px;font-size:8.4px;color:#2d3163;letter-spacing:-0.15px;-webkit-text-stroke:0;">web</div>
<div class="a" style="left:188px;top:351.15px;width:664px;height:1px;background:#e8eaf0"></div>
<div class="a" style="left:196.1px;top:334.54999999999995px;width:9.6px;height:8.8px;border:1px solid #9896d4;background:#fff"></div>
<div class="t" style="left:223.3px;top:335.05px;font-size:8px;color:#5a3db5;letter-spacing:-0.05px;">2409251268201</div>
<div class="t" style="left:324.6px;top:335.05px;font-size:8px;color:#2d3163;letter-spacing:0.0px;">cypcarrier573e</div>
<div class="t" style="left:431.4px;top:333.95px;font-size:8px;color:#2d3163;letter-spacing:0.0px;">-</div>
<div class="a" style="left:543.6px;top:336.25px;width:4.6px;height:4.6px;border-radius:50%;background:#34b24a"></div>
<div class="t" style="left:551.7px;top:335.05px;font-size:8px;color:#2d3163;">1</div>
<div class="a" style="left:631.2px;top:331.95px;width:37.4px;height:12px;border-radius:2px;background:#7a8699"></div>
<svg style="left:0;top:0" width="860" height="440" viewBox="0 0 860 440" fill="none" stroke="#e9ecf2" stroke-width="0.9"><ellipse cx="638.4" cy="338.4" rx="2.1" ry="2.8"/><path d="M638.4 337.3V338.7M637.6 334.9H639.2"/></svg>
<div class="t" style="left:645.8px;top:334.55px;font-size:8.6px;transform:scaleX(0.89);transform-origin:0 0;color:#fff;">0 hrs</div>
<div class="t" style="left:702.3px;top:333.95px;font-size:8px;color:#2d3163;">-</div>
<div class="a" style="left:786.9px;top:330.75px;width:15.1px;height:14.4px;background:#fbe3f1;border-radius:1px"></div>
<div class="t" style="left:791.0px;top:333.95px;font-size:8.2px;color:#e463b9;-webkit-text-stroke:0;">w</div>
<div class="t" style="left:806.4px;top:333.45px;font-size:8.4px;color:#2d3163;letter-spacing:-0.15px;-webkit-text-stroke:0;">web</div>
<div class="a" style="left:188px;top:378.29999999999995px;width:664px;height:1px;background:#e8eaf0"></div>
<div class="a" style="left:196.1px;top:361.69999999999993px;width:9.6px;height:8.8px;border:1px solid #9896d4;background:#fff"></div>
<div class="t" style="left:223.3px;top:362.20px;font-size:8px;color:#5a3db5;letter-spacing:-0.05px;">240926049184</div>
<div class="t" style="left:324.6px;top:362.20px;font-size:8px;color:#2d3163;letter-spacing:0.0px;">cypcarrier573e</div>
<div class="t" style="left:431.4px;top:362.20px;font-size:8px;color:#2d3163;letter-spacing:0.0px;">Sep 26 2024...</div>
<div class="a" style="left:543.6px;top:363.40px;width:4.6px;height:4.6px;border-radius:50%;background:#34b24a"></div>
<div class="t" style="left:551.7px;top:362.20px;font-size:8px;color:#2d3163;">1</div>
<div class="a" style="left:631.2px;top:359.10px;width:37.4px;height:12px;border-radius:2px;background:#7a8699"></div>
<svg style="left:0;top:0" width="860" height="440" viewBox="0 0 860 440" fill="none" stroke="#e9ecf2" stroke-width="0.9"><ellipse cx="638.4" cy="365.6" rx="2.1" ry="2.8"/><path d="M638.4 364.5V365.9M637.6 362.1H639.2"/></svg>
<div class="t" style="left:645.8px;top:361.70px;font-size:8.6px;transform:scaleX(0.89);transform-origin:0 0;color:#fff;">0 hrs</div>
<div class="t" style="left:702.3px;top:361.10px;font-size:8px;color:#2d3163;">-</div>
<div class="a" style="left:786.9px;top:357.90px;width:15.1px;height:14.4px;background:#fbe3f1;border-radius:1px"></div>
<div class="t" style="left:791.0px;top:361.10px;font-size:8.2px;color:#e463b9;-webkit-text-stroke:0;">w</div>
<div class="t" style="left:806.4px;top:360.60px;font-size:8.4px;color:#2d3163;letter-spacing:-0.15px;-webkit-text-stroke:0;">web</div>
<div class="a" style="left:188px;top:405.45px;width:664px;height:1px;background:#e8eaf0"></div>
<div class="a" style="left:196.1px;top:388.84999999999997px;width:9.6px;height:8.8px;border:1px solid #9896d4;background:#fff"></div>
<div class="t" style="left:223.3px;top:389.35px;font-size:8px;color:#5a3db5;letter-spacing:-0.05px;">2305100577553</div>
<div class="t" style="left:324.6px;top:389.35px;font-size:8px;color:#2d3163;letter-spacing:0.0px;">Asendia&amp;Carrier1</div>
<div class="t" style="left:431.4px;top:389.35px;font-size:8px;color:#2d3163;letter-spacing:0.0px;">May 10 202...</div>
<div class="a" style="left:543.6px;top:390.55px;width:4.6px;height:4.6px;border-radius:50%;background:#34b24a"></div>
<div class="t" style="left:551.7px;top:389.35px;font-size:8px;color:#2d3163;">1</div>
<div class="a" style="left:631.2px;top:386.25px;width:37.4px;height:12px;border-radius:2px;background:#7a8699"></div>
<svg style="left:0;top:0" width="860" height="440" viewBox="0 0 860 440" fill="none" stroke="#e9ecf2" stroke-width="0.9"><ellipse cx="638.4" cy="392.7" rx="2.1" ry="2.8"/><path d="M638.4 391.6V393.0M637.6 389.2H639.2"/></svg>
<div class="t" style="left:645.8px;top:388.85px;font-size:8.6px;transform:scaleX(0.89);transform-origin:0 0;color:#fff;">0 hrs</div>
<div class="t" style="left:702.3px;top:388.25px;font-size:8px;color:#2d3163;">-</div>
<div class="a" style="left:786.9px;top:385.05px;width:15.1px;height:14.4px;background:#fbe3f1;border-radius:1px"></div>
<div class="t" style="left:791.0px;top:388.25px;font-size:8.2px;color:#e463b9;-webkit-text-stroke:0;">w</div>
<div class="t" style="left:806.4px;top:387.75px;font-size:8.4px;color:#2d3163;letter-spacing:-0.15px;-webkit-text-stroke:0;">web</div>
<div class="a" style="left:196.1px;top:415.99999999999994px;width:9.6px;height:8.8px;border:1px solid #9896d4;background:#fff"></div>
<div class="t" style="left:223.3px;top:416.50px;font-size:8px;color:#5a3db5;letter-spacing:-0.05px;">2403071142767</div>
<div class="t" style="left:324.6px;top:416.50px;font-size:8px;color:#2d3163;letter-spacing:0.0px;">New Carrier</div>
<div class="t" style="left:431.4px;top:415.40px;font-size:8px;color:#2d3163;letter-spacing:0.0px;">-</div>
<div class="a" style="left:543.6px;top:417.70px;width:4.6px;height:4.6px;border-radius:50%;background:#34b24a"></div>
<div class="t" style="left:551.7px;top:416.50px;font-size:8px;color:#2d3163;">2</div>
<div class="a" style="left:631.2px;top:413.40px;width:37.4px;height:12px;border-radius:2px;background:#7a8699"></div>
<svg style="left:0;top:0" width="860" height="440" viewBox="0 0 860 440" fill="none" stroke="#e9ecf2" stroke-width="0.9"><ellipse cx="638.4" cy="419.9" rx="2.1" ry="2.8"/><path d="M638.4 418.8V420.2M637.6 416.4H639.2"/></svg>
<div class="t" style="left:645.8px;top:416.00px;font-size:8.6px;transform:scaleX(0.89);transform-origin:0 0;color:#fff;">0 hrs</div>
<div class="t" style="left:702.3px;top:415.40px;font-size:8px;color:#2d3163;">-</div>
<div class="a" style="left:786.9px;top:412.20px;width:15.1px;height:14.4px;background:#fbe3f1;border-radius:1px"></div>
<div class="t" style="left:791.0px;top:415.40px;font-size:8.2px;color:#e463b9;-webkit-text-stroke:0;">w</div>
<div class="t" style="left:806.4px;top:414.90px;font-size:8.4px;color:#2d3163;letter-spacing:-0.15px;-webkit-text-stroke:0;">web</div>
<div class="a" style="left:193.8px;top:146.2px;width:111px;height:72.8px;border:2px solid #f4000f;box-shadow:0 0 2px rgba(0,0,0,0.05)"></div>
<div class="a" style="left:196.8px;top:149px;width:103px;height:20px;background:#fff;border:1px solid #cdcaee;border-left:1px solid #7b62cf;border-right:1px solid #7b62cf"></div>
<div class="t" style="left:202.9px;top:156.20px;font-size:8.4px;transform:scaleX(0.86);transform-origin:0 0;color:#3a3b52;">5 SKUs</div>
<svg style="left:0;top:0" width="860" height="440" viewBox="0 0 860 440" fill="none" stroke="#3c4070" stroke-width="1" stroke-linecap="round"><path d="M276.6 158.2L279.2 160.8M279.2 158.2L276.6 160.8" stroke-width="1.1"/><path d="M288.2 160.4L289.8 158.8L291.4 160.4" stroke="#6a6d90"/></svg>
<div class="a" style="left:196.8px;top:168.5px;width:105.3px;height:47px;background:#fff;box-shadow:0 1px 3px rgba(40,30,90,0.18)"></div>
<div class="a" style="left:201.2px;top:172.4px;width:96.4px;height:19.2px;background:#fff;border:1px solid #e3e1ef"></div>
<div class="t" style="left:208.7px;top:177.60px;font-size:8.6px;color:#3a3b52;">5</div>
<div class="a" style="left:197.1px;top:195px;width:104.9px;height:19.9px;background:#4b2aad;border-radius:0 0 2px 2px"></div>
<div class="t" style="left:202.9px;top:200.80px;font-size:8.4px;transform:scaleX(0.86);transform-origin:0 0;color:#fff;">5 SKUs</div>
</body></html>
